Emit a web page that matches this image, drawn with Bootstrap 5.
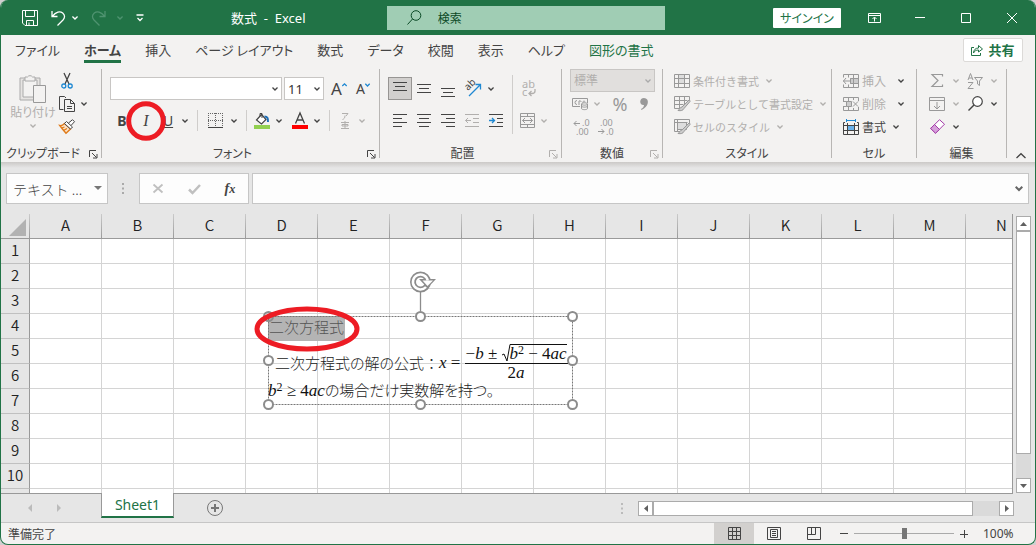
<!DOCTYPE html>
<html lang="ja">
<head>
<meta charset="utf-8">
<meta name="viewport" content="width=device-width, initial-scale=1">
<title>数式 - Excel</title>
<link href="https://cdn.jsdelivr.net/npm/bootstrap@5.3.0/dist/css/bootstrap.min.css" rel="stylesheet">
<style>
:root { --xl: #217346; --ink: #444; --dim: #b1afad; --line: #c8c6c4; }
body { font-family: "Noto Sans CJK JP", sans-serif; font-size: 12px; line-height: 16px; color: var(--ink); background: #d0d0d0; fill: none; stroke: currentColor; }
svg { display: block; overflow: visible; flex: none; }
.kana { font-feature-settings: "palt"; }
.app { height: 100vh; border: 1px solid var(--xl); border-top: 0; border-radius: 8px; overflow: hidden; background: #f3f2f1; }

.titlebar { display: grid; grid-template-columns: 386fr 279fr 370fr; height: 35px; flex: none; background: var(--xl); color: #fff; }
.titlebar .btn { color: inherit; }
.titlebar .quick { padding-left: 19px; }
.titlebar .btn.faded { color: #4f9370; }
.doc-title { font-family: "Noto Sans", "Noto Sans CJK JP", sans-serif; font-size: 13px; white-space: pre; }
.search { height: 24px; padding: 0 20px; background: #a0cdb4; color: #0b4a26; }
.search input { border: 0; background: none; padding: 0; font-size: 12px; color: inherit; box-shadow: none; }
.search input:focus { background: none; box-shadow: none; }
.search input::placeholder { color: inherit; opacity: 1; }
.titlebar .signin.btn { height: 20px; width: 68px; margin-right: 10px; background: #fff; color: var(--xl); border-radius: 1px; font-size: 12px; }
.winbtn { width: 46px; height: 34px; }

.btn { --bs-btn-padding-x: 0; --bs-btn-padding-y: 0; --bs-btn-border-width: 0; --bs-btn-border-radius: 0; --bs-btn-font-size: 12px; --bs-btn-line-height: 16px; --bs-btn-color: var(--ink); --bs-btn-disabled-color: var(--dim); --bs-btn-disabled-opacity: 1; display: inline-flex; align-items: center; justify-content: center; flex: none; white-space: nowrap; }
.btn.grey { --bs-btn-disabled-color: #999; }
.tabs { height: 29px; flex: none; padding-left: 14px; padding-right: 12px; }
.tabs .nav { gap: 24px; font-size: 13px; }
.tabs .nav-link { padding: 0; line-height: 21px; border-bottom: 3px solid transparent; color: var(--ink); height: 24px; white-space: nowrap; }
.tabs .nav-link.active { font-weight: 700; border-color: var(--xl); }
.tabs .nav-link.contextual { color: var(--xl); }
.share.btn { width: 60px; height: 24px; gap: 5px; background: #fff; border: 1px solid #dcdad8; border-radius: 2px; color: var(--xl); font-weight: 700; font-size: 13px; }

.ribbon { height: 98px; flex: none; padding: 5px 0 4px; }
.group { border-right: 1px solid #b8b6b4; flex: none; }
.group-name { position: relative; line-height: 10px; text-align: center; flex: none; }
.launcher.btn { position: absolute; right: 3px; bottom: -1px; width: 10px; height: 10px; }
.g-clip { width: 101px; } .g-font { width: 278px; } .g-align { width: 182px; } .g-num { width: 101px; }
.g-style { width: 169px; } .g-cell { width: 85px; } .g-edit { width: 90px; }
.inset { padding-left: 11px; }
.paste { width: 48px; }
.tall { padding-top: 8px; gap: 9px; }
.toolrow { display: flex; align-items: center; height: 23px; }
.t24 { width: 24px; height: 23px; } .t20 { width: 20px; height: 23px; } .chev { width: 14px; height: 23px; }
.rule { width: 1px; height: 21px; margin: 0 5px; background: #cfcdcb; }
.rule-tall { width: 1px; height: 59px; margin: 6px 4px 0; background: #cfcdcb; }
.form-select.pick { height: 23px; padding: 0 14px 0 3px; border: 1px solid var(--line); border-radius: 0; font: 13px/20px "Noto Sans", "Noto Sans CJK JP", sans-serif; color: #333; background: #fff url("data:image/svg+xml,%3Csvg xmlns='http://www.w3.org/2000/svg' viewBox='0 0 6 4'%3E%3Cpath d='M.5.5 3 3 5.5.5' fill='none' stroke='%23444' stroke-width='1.3'/%3E%3C/svg%3E") no-repeat right 3px center / 6px 4px; }
.form-select.pick:disabled { background-color: #e1dfdd; background-image: url("data:image/svg+xml,%3Csvg xmlns='http://www.w3.org/2000/svg' viewBox='0 0 6 4'%3E%3Cpath d='M.5.5 3 3 5.5.5' fill='none' stroke='%23aaa' stroke-width='1.3'/%3E%3C/svg%3E"); color: var(--dim); font-size: 12px; opacity: 1; }
.pick-font.pick { width: 172px; }
.pick-size.pick { width: 40px; margin: 0 3px 0 2px; }
.pick-number.pick { width: 85px; }
.grow.btn { font-size: 17px; } .shrink.btn { font-size: 14px; }
.letter.btn { font-size: 14px; }
.italic.btn { font: italic 16px "Liberation Serif", serif; }
.percent.btn { font-size: 18px; }
.pressed.btn { background: #d2d0ce; border: 1px solid #979593; }
.glyph { font-family: "Noto Sans", sans-serif; }
.labelled { gap: 3px; height: 23px; }
.styles .btn { font-size: 11px; }
.icon-text { font-family: "Noto Sans", sans-serif; fill: currentColor; stroke: none; }
.ring { position: absolute; left: 50%; top: 50%; transform: translate(-50%, -50%); color: #ed1c24; pointer-events: none; z-index: 3; }

.formulas { flex: none; padding: 11px 6px 10px 5px; background: linear-gradient(#cbc9c7, #e6e6e6 6px); }
.formulas .box, .formulas .form-control { height: 31px; border: 1px solid #c6c6c6; border-radius: 0; background: #fdfdfd; }
.formulas .box { width: 110px; margin-right: 3px; }
.formulas .form-control { font-size: 14px; padding: 0 8px; color: #444; }
.formulas .grip { margin: 0 15px 0 14px; color: #aaa; }
.namebox { width: 102px; }
.namebox .form-control { padding: 0 24px 0 6px; font-weight: 300; }
.over { position: absolute; right: 4px; top: 7px; width: 12px; height: 16px; }
.fx.btn { font: italic 700 14px/16px "Liberation Serif", serif; }

.workspace { flex: 1 1 0; min-height: 0; background: #e6e6e6; }
.canvas { position: relative; overflow: hidden; border-right: 1px solid #999; border-bottom: 1px solid #999; flex: 1 1 0; min-width: 0; background: #fff; }
.cells { table-layout: fixed; width: 0; border-collapse: separate; border-spacing: 0; color: #222; font-size: 15px; line-height: 20px; margin: 0; }
.cells th, .cells td { width: 72px; height: 25px; padding: 0 0 2px; text-align: center; font-weight: 350; border-right: 1px solid #d4d4d4; border-bottom: 1px solid #d4d4d4; }
.cells thead th { background: #e6e6e6; border-right: 1px solid; border-image: linear-gradient(#ccc, #999) 1; border-bottom: 1px solid #999; }
.cells tbody th { background: #e6e6e6; border-right-color: #999; border-bottom-color: #c0c0c0; }
.cells .corner { width: 29px; }
.cells .corner svg { margin: 4px 0 0 8px; }

.shape { position: absolute; left: 267px; top: 102px; width: 305px; height: 89px; color: #222; font-size: 15px; line-height: 22px; white-space: nowrap; font-weight: 300; }
.frame { position: absolute; left: 0; top: 0; z-index: 2; }
.picked { position: relative; background: #b4b4b4; color: #555; height: 25px; width: 77px; padding-left: 1px; }
.eqline { height: 38px; padding-left: 7px; margin-top: 3px; }
.eqline .wide { font-feature-settings: normal; }
.lastline { line-height: 16px; }
.math { font-family: "Liberation Serif", serif; font-weight: 400; color: #111; font-size: 17px; }
.math sup { font-size: 12px; top: -5px; line-height: 0; }
.fraction { display: inline-flex; flex-direction: column; align-items: center; }
.fraction .num { border-bottom: 1px solid #111; line-height: 19px; padding: 0 1px; display: flex; }
.fraction .den { line-height: 18px; }
.radicand { border-top: 1px solid #111; line-height: 17px; }

.vscroll { width: 15px; margin: 2px 4px 1px 3px; background: #dadada; }
.sbtn.btn { width: 15px; height: 15px; background: #fff; border: 1px solid #ababab; color: #606060; }
.vthumb { flex: 1 1 0; margin-bottom: 24px; background: #fff; border: 1px solid #ababab; }
.sheetbar { height: 28px; flex: none; background: #e6e6e6; color: #bbb; }
.sheetbar .navs { width: 100px; padding-left: 26px; gap: 23px; }
.sheet-tab { width: 73px; height: 25px; margin-top: -1px; align-self: flex-start; position: relative; background: #fff; border-left: 1px solid #999; border-right: 1px solid #999; border-bottom: 2px solid var(--xl); color: var(--xl); font: 14px/24px "Noto Sans", sans-serif; text-align: center; text-decoration: none; }
.newsheet.btn { width: 33px; margin-left: 24px; }
.sheetbar .grip { margin-right: 15px; }
.hscroll { flex: 0 0 376px; height: 15px; margin-right: 21px; background: #dadada; }
.hthumb { flex: 0 0 320px; border: 1px solid #ababab; background: #fff; }
.statusbar { height: 22px; flex: none; border-top: 1px solid #c6c6c6; padding-left: 7px; }
.view.btn { width: 40px; height: 21px; }
.view.on { background: #d2d0ce; }
.zoomer { -webkit-appearance: none; appearance: none; width: 100px; height: 12px; background: linear-gradient(#aaa, #aaa) center / 100% 1px no-repeat; }
.zoomer::-webkit-slider-thumb { -webkit-appearance: none; width: 5px; height: 11px; background: #767676; border-radius: 0; }
.pct { width: 61px; padding-left: 9px; font: 12px/16px "Noto Sans", sans-serif; }
</style>
</head>
<body>
<svg width="0" height="0" class="position-absolute" aria-hidden="true">
  <symbol id="cv" viewBox="0 0 6 4"><path d="M.4.5 3 3 5.6.5" stroke-width="1.4"/></symbol>
  <symbol id="launch" viewBox="0 0 9 9"><path d="M.5 7V.5H7M3 3l4.500 4.500M8 4v4H4"/></symbol>
  <symbol id="dots" viewBox="0 0 2 11"><path d="M0 1h2M0 5.500h2M0 10h2" stroke-width="2"/></symbol>
</svg>

<div class="app d-flex flex-column">
  <header class="titlebar">
    <div class="d-flex align-items-center">
      <div class="quick d-flex align-items-center">
        <button class="btn t20" aria-label="上書き保存"><svg width="16" height="16" viewBox="0 0 16 16"><path d="M.5.5h15v15H3L.5 13zM3.500.5v6h9v-6M4.500 15.500v-5h7v5M7 15v-2.500"/></svg></button>
        <button class="btn ms-2 t20" aria-label="元に戻す"><svg width="15" height="16" viewBox="0 0 15 16" stroke-width="1.3"><path d="M1 1v5.500h5.500M1.300 6.300C5 1.500 9 .8 11.700 3c2.600 2.300 2.200 5 .3 7l-5.500 5.500"/></svg></button>
        <button class="btn chev me-1" aria-label="元に戻す一覧"><svg width="6" height="4"><use href="#cv"/></svg></button>
        <button class="btn t24 faded" disabled aria-label="やり直し"><svg width="15" height="16" viewBox="0 0 15 16" stroke-width="1.3"><path d="M14 1v5.500H8.500M13.700 6.300C10 1.500 6 .8 3.300 3c-2.600 2.300-2.200 5-.3 7l5.500 5.500"/></svg></button>
        <button class="btn t20 faded" disabled aria-label="やり直し一覧"><svg width="6" height="4"><use href="#cv"/></svg></button>
        <button class="btn t20" aria-label="ツールバーの設定"><svg width="8" height="8" viewBox="0 0 8 8"><path d="M.5 1h7M1.500 4 4 6.500 6.500 4" stroke-width="1.3"/></svg></button>
      </div>
      <div class="doc-title flex-fill text-center">数式  -  Excel</div>
    </div>
    <label class="search d-flex align-items-center align-self-center w-100">
      <svg class="me-3" width="15" height="15" viewBox="0 0 15 15"><circle cx="9" cy="5.500" r="4.800"/><path d="M5.500 9 .5 14.500"/></svg>
      <input class="form-control" type="search" placeholder="検索" aria-label="検索">
    </label>
    <div class="d-flex align-items-center justify-content-end">
      <button class="btn signin kana">サインイン</button>
      <button class="btn winbtn" aria-label="リボンの表示オプション"><svg width="13" height="10" viewBox="0 0 13 10"><path d="M.5.5h12v9H.5zM.5 2.500h12M6.500 8.500v-4M4.500 6l2-2 2 2"/></svg></button>
      <button class="btn winbtn" aria-label="最小化"><svg width="10" height="1" viewBox="0 0 10 1"><path d="M0 .5h10"/></svg></button>
      <button class="btn winbtn" aria-label="最大化"><svg width="10" height="10" viewBox="0 0 10 10"><path d="M.5.5h9v9h-9z"/></svg></button>
      <button class="btn winbtn" aria-label="閉じる"><svg width="10" height="10" viewBox="0 0 10 10"><path d="M0 0l10 10M10 0 0 10"/></svg></button>
    </div>
  </header>

  <div class="tabs d-flex align-items-center justify-content-between">
    <nav class="nav flex-nowrap kana align-self-start pt-1">
      <a class="nav-link" href="#">ファイル</a><a class="nav-link active" href="#" aria-current="page">ホーム</a><a class="nav-link" href="#">挿入</a><a class="nav-link" href="#">ページ レイアウト</a><a class="nav-link" href="#">数式</a><a class="nav-link" href="#">データ</a><a class="nav-link" href="#">校閲</a><a class="nav-link" href="#">表示</a><a class="nav-link" href="#">ヘルプ</a><a class="nav-link contextual" href="#">図形の書式</a>
    </nav>
    <button class="btn share"><svg width="12" height="12" viewBox="0 0 12 12"><path d="M3 3.500H.5v8h9V9M2.500 9c0-3 2-5 5-5V1.500L11.500 5 7.500 8V6C5 6 3.500 7 2.500 9z"/></svg>共有</button>
  </div>

  <div class="ribbon d-flex">
    <section class="group g-clip d-flex flex-column">
      <div class="d-flex flex-fill">
        <button class="btn paste flex-column kana justify-content-start pt-1 ms-2" disabled>
          <svg width="28" height="31" viewBox="0 0 28 31"><path fill="#e6e4e2" stroke="#aaa" d="M1 5h20v22H1z"/><path fill="#f3f2f1" stroke="#aaa" d="M4 7h14v17H4z"/><path fill="#f3f2f1" stroke="#aaa" d="M6 8V4h2.500a3 3 0 0 1 5 0H16v4z"/><path fill="#f3f2f1" stroke="#999" d="M14.500 12.500h12v17h-12z"/></svg>
          <span>貼り付け</span>
          <svg class="mt-1" width="6" height="4"><use href="#cv"/></svg>
        </button>
        <div>
          <div class="toolrow"><button class="btn t20" aria-label="切り取り"><svg width="12" height="16" viewBox="0 0 12 16"><path d="M3 0l5 11M9 0 4 11" stroke-width="1.300"/><g stroke="#1e88d2" stroke-width="1.300"><circle cx="2.800" cy="13" r="2"/><circle cx="9.200" cy="13" r="2"/></g></svg></button></div>
          <div class="toolrow"><button class="btn t20" aria-label="コピー"><svg width="16" height="16" viewBox="0 0 16 16"><path d="M4.500 13.500h-4V.5h5L7 2M5.500 3.500h6l4 4v8h-10zM11.500 3.500v4h4M8 10.500h5M8 12.500h5"/></svg></button><button class="btn chev" aria-label="コピーのオプション"><svg width="6" height="4"><use href="#cv"/></svg></button></div>
          <div class="toolrow"><button class="btn t20" aria-label="書式のコピー"><svg width="16" height="15" viewBox="0 0 16 15"><path fill="#fbe3c8" stroke="#e07b1a" stroke-width="1.400" d="M.8 6.500C3 7 4.500 5.500 5.500 4.500l6 5.500L7 14.300C5 12 3 9.500.8 6.500z"/><path stroke="#e07b1a" stroke-width="1.300" d="M2.500 9l3-1M4.500 11.500l3.500-2"/><path fill="#fff" d="M5.500 4.500l2-2 6 5.500-2 2zM9.500 4 13.500.7l2 2L12 6.500"/></svg></button></div>
        </div>
      </div>
      <div class="group-name kana pe-3">クリップボード<button class="btn launcher" aria-label="クリップボードの設定"><svg width="9" height="9"><use href="#launch"/></svg></button></div>
    </section>

    <section class="group g-font d-flex flex-column">
      <div class="tall d-flex flex-column flex-fill ps-2">
        <div class="toolrow">
          <select class="form-select pick pick-font" aria-label="フォント"><option></option></select>
          <select class="form-select pick pick-size" aria-label="フォント サイズ"><option>11</option></select>
          <button class="btn t24 glyph grow" aria-label="フォント サイズの拡大">A<svg width="5" height="12" viewBox="0 0 5 12" stroke="#1e88d2"><path d="M.3 3 2.500.8 4.700 3" stroke-width="1.300"/></svg></button>
          <button class="btn t24 glyph shrink" aria-label="フォント サイズの縮小">A<svg width="5" height="12" viewBox="0 0 5 12" stroke="#1e88d2"><path d="M.3.8 2.500 3 4.700.8" stroke-width="1.300"/></svg></button>
        </div>
        <div class="toolrow">
          <button class="btn t24 glyph letter fw-bold">B</button>
          <button class="btn t24 italic position-relative">I<svg class="ring" width="40" height="40" viewBox="0 0 40 40"><circle cx="20" cy="20" r="17.300" stroke-width="5"/></svg></button>
          <button class="btn t20 glyph letter text-decoration-underline">U</button>
          <button class="btn chev" aria-label="下線の種類"><svg width="6" height="4"><use href="#cv"/></svg></button>
          <span class="rule"></span>
          <button class="btn t24" aria-label="罫線"><svg width="15" height="15" viewBox="0 0 15 15"><path stroke="#666" stroke-dasharray="1 1" d="M.5 0v14M7.500 0v14M14.500 0v14M0 .5h15M0 7.500h15"/><path d="M0 14.500h15"/></svg></button>
          <button class="btn chev" aria-label="罫線の種類"><svg width="6" height="4"><use href="#cv"/></svg></button>
          <span class="rule"></span>
          <button class="btn t20" aria-label="塗りつぶしの色"><svg width="16" height="16" viewBox="0 0 16 16"><path fill="#92d050" stroke="none" d="M0 12h16v4H0z"/><path fill="#fff" stroke-width="1.200" d="M2.500 7 7.500 1.500l4.500 5L7.500 11z"/><path d="M6 3.500V.5h2V5"/><path stroke="#1e6fb8" stroke-width="2" d="M10.500 3.500c3 0 3.500 1.500 3.500 5.500"/></svg></button>
          <button class="btn chev me-1" aria-label="塗りつぶしの色一覧"><svg width="6" height="4"><use href="#cv"/></svg></button>
          <button class="btn t20" aria-label="フォントの色"><svg width="16" height="16" viewBox="0 0 16 16"><path fill="#f00" stroke="none" d="M0 12h16v4H0z"/><path d="M3.500 10.500 8 0l4.500 10.500M5 7h6" stroke-width="1.300"/></svg></button>
          <button class="btn chev" aria-label="フォントの色一覧"><svg width="6" height="4"><use href="#cv"/></svg></button>
          <span class="rule"></span>
          <button class="btn t20" disabled aria-label="ふりがな"><svg width="8" height="16" viewBox="0 0 8 16"><path d="M1 .5h6L5 3M4 2.500C4 5 3 6 1.500 6.500M0 9.500h8M1 11.500h6v1.500H1zM0 15.500h8M4 8v7"/></svg></button>
          <button class="btn chev" disabled aria-label="ふりがな一覧"><svg width="6" height="4"><use href="#cv"/></svg></button>
        </div>
      </div>
      <div class="group-name kana pe-3">フォント<button class="btn launcher" aria-label="フォントの設定"><svg width="9" height="9"><use href="#launch"/></svg></button></div>
    </section>

    <section class="group g-align d-flex flex-column">
      <div class="d-flex flex-fill ps-2">
        <div class="tall d-flex flex-column">
          <div class="toolrow">
            <button class="btn t24 pressed" aria-label="上揃え"><svg class="mb-1" width="14" height="10" viewBox="0 0 14 10"><path d="M0 .5h14M2 4.500h10M0 8.500h14"/></svg></button>
            <button class="btn t24" aria-label="上下中央揃え"><svg width="14" height="10" viewBox="0 0 14 10"><path d="M0 .5h14M2 4.500h10M0 8.500h14"/></svg></button>
            <button class="btn t24 pt-2" aria-label="下揃え"><svg width="14" height="10" viewBox="0 0 14 10"><path d="M0 .5h14M2 4.500h10M0 8.500h14"/></svg></button>
            <button class="btn t24" aria-label="方向"><svg width="17" height="17" viewBox="0 0 17 17"><text class="icon-text" transform="translate(4 11) rotate(-45)" font-size="10">ab</text><path stroke="#1e88d2" stroke-width="1.300" d="M5 16 16 5M11.500 4.500H16.500V9.500"/></svg></button>
            <button class="btn chev" aria-label="方向の一覧"><svg width="6" height="4"><use href="#cv"/></svg></button>
          </div>
          <div class="toolrow">
            <button class="btn t24" aria-label="左揃え"><svg width="14" height="13" viewBox="0 0 14 13"><path d="M0 .5h14M0 4.500h9M0 8.500h14M0 12.500h9"/></svg></button>
            <button class="btn t24" aria-label="中央揃え"><svg width="14" height="13" viewBox="0 0 14 13"><path d="M0 .5h14M2 4.500h10M0 8.500h14M2 12.500h10"/></svg></button>
            <button class="btn t24" aria-label="右揃え"><svg width="14" height="13" viewBox="0 0 14 13"><path d="M0 .5h14M5 4.500h9M0 8.500h14M5 12.500h9"/></svg></button>
            <button class="btn t24" disabled aria-label="インデントを減らす"><svg width="14" height="13" viewBox="0 0 14 13"><path d="M0 .5h14M8 4.500h6M8 8.500h6M0 12.500h14M.5 6.500H6M3 4 .5 6.500 3 9"/></svg></button>
            <button class="btn t24" aria-label="インデントを増やす"><svg width="14" height="13" viewBox="0 0 14 13"><path d="M0 .5h14M8 4.500h6M8 8.500h6M0 12.500h14"/><path stroke="#1e88d2" stroke-width="1.300" d="M0 6.500h5.500M3 4l2.500 2.500L3 9"/></svg></button>
          </div>
        </div>
        <span class="rule-tall"></span>
        <div class="tall d-flex flex-column">
          <div class="toolrow"><button class="btn t24" disabled aria-label="折り返して全体を表示する"><svg width="14" height="16" viewBox="0 0 14 16"><text class="icon-text" x="0" y="7" font-size="11">ab</text><text class="icon-text" x="0" y="15" font-size="11">c</text><path d="M13 8v2c0 2-1 2.500-3 2.500H7M9.500 10 7 12.500 9.500 15" stroke-width="1.300"/></svg></button></div>
          <div class="toolrow"><button class="btn t20 grey" disabled aria-label="セルを結合して中央揃え"><svg width="15" height="15" viewBox="0 0 15 15"><path d="M.5.5h14v14H.5zM.5 3.500h14M.5 11.500h14M7.500.5v3M7.500 11.500v3M2.500 7.500h10M5 5 2.500 7.500 5 10M10 5l2.500 2.500L10 10"/></svg></button><button class="btn chev" disabled aria-label="結合の一覧"><svg width="6" height="4"><use href="#cv"/></svg></button></div>
        </div>
      </div>
      <div class="group-name pe-3">配置<button class="btn launcher" disabled aria-label="配置の設定"><svg width="9" height="9"><use href="#launch"/></svg></button></div>
    </section>

    <section class="group g-num d-flex flex-column">
      <div class="flex-fill ps-2">
        <select class="form-select pick pick-number" aria-label="数値の書式" disabled><option>標準</option></select>
        <div class="toolrow">
          <button class="btn t20 grey" disabled aria-label="通貨表示形式"><svg width="16" height="13" viewBox="0 0 16 13"><path d="M15.500 6V1.500H.5v8H8M5 3.500a2 2 0 1 0 0 4M7 8V4c1.500-.5 2 0 2 1M11 7V5.500c0-2 2-2 2 0"/><path fill="#f3f2f1" d="M9.500 7v4.500c0 1.500 6 1.500 6 0V7M9.500 7c0 1.500 6 1.500 6 0s-6-1.500-6 0M9.500 9c0 1.500 6 1.500 6 0"/></svg></button>
          <button class="btn chev" disabled aria-label="通貨の一覧"><svg width="6" height="4"><use href="#cv"/></svg></button>
          <button class="btn t24 glyph percent grey ms-1" disabled>%</button>
          <button class="btn t24 grey" disabled aria-label="桁区切りスタイル"><svg width="8" height="12" viewBox="0 0 8 12"><path fill="#999" stroke="none" d="M4 0c6 0 5 9-2.500 12L1 11c2-1 3-2.500 3-4-5 .5-5-7 0-7z"/></svg></button>
        </div>
        <div class="toolrow">
          <button class="btn t24 grey" disabled aria-label="小数点以下の表示桁数を増やす"><svg width="16" height="16" viewBox="0 0 16 16"><path d="M0 4.500h6M2.500 2 0 4.500 2.500 7"/><g class="icon-text" font-size="9"><text x="8" y="7">.0</text><text x="2" y="16">.00</text></g></svg></button>
          <button class="btn t24 grey" disabled aria-label="小数点以下の表示桁数を減らす"><svg width="16" height="16" viewBox="0 0 16 16"><path d="M0 12.500h6M3.500 10 6 12.500 3.500 15"/><g class="icon-text" font-size="9"><text x="2" y="7">.00</text><text x="8" y="16">.0</text></g></svg></button>
        </div>
      </div>
      <div class="group-name">数値<button class="btn launcher" disabled aria-label="数値の設定"><svg width="9" height="9"><use href="#launch"/></svg></button></div>
    </section>

    <section class="group g-style d-flex flex-column">
      <div class="styles inset flex-fill d-flex flex-column align-items-start kana">
        <button class="btn labelled" disabled><svg width="16" height="14" viewBox="0 0 16 14" stroke="#999"><path fill="#ddd" d="M4.500.5h6v9h-6z"/><path d="M.5.5h15v13H.5zM4.500.5v13M10.500.5v13M.5 4.500h15M.5 9.500h15"/></svg>条件付き書式<svg width="6" height="4" class="ms-1"><use href="#cv"/></svg></button>
        <button class="btn labelled" disabled><svg width="16" height="15" viewBox="0 0 16 15" stroke="#999"><path d="M8 12.500H.5V.5h15V5M5.500.5v12M10.500.5V8M.5 4.500h13M.5 8.500h9"/><path fill="#ccc" d="M15.500 3.500 8 11c-2 0-2 2-4 3.500 3 .5 5 0 6-2l6-7z"/></svg>テーブルとして書式設定<svg width="6" height="4" class="ms-1"><use href="#cv"/></svg></button>
        <button class="btn labelled" disabled><svg width="16" height="15" viewBox="0 0 16 15" stroke="#999"><path fill="#ddd" d="M3.500 3.500h9v7h-9z"/><path d="M8 12.500H.5V.5h15V5M3.500.5v12M.5 3.500h13"/><path fill="#ccc" d="M15.500 3.500 8 11c-2 0-2 2-4 3.500 3 .5 5 0 6-2l6-7z"/></svg>セルのスタイル<svg width="6" height="4" class="ms-1"><use href="#cv"/></svg></button>
      </div>
      <div class="group-name kana">スタイル</div>
    </section>

    <section class="group g-cell d-flex flex-column">
      <div class="inset flex-fill">
        <div class="toolrow"><button class="btn labelled" disabled><svg width="16" height="14" viewBox="0 0 16 14" stroke="#999"><path fill="#ccc" d="M7.500 4.500h8v5h-8z"/><path d="M3 .5H.5v3M.5 10.500v3h15V.5H3M5.500.5v3M5.500 10.500v3M10.500.5v13M7.500 4.500h8M7.500 9.500h8M0 7h7M3 4 .5 7 3 10"/></svg>挿入</button><button class="btn chev ms-2" aria-label="挿入の一覧"><svg width="6" height="4"><use href="#cv"/></svg></button></div>
        <div class="toolrow"><button class="btn labelled" disabled><svg width="16" height="14" viewBox="0 0 16 14" stroke="#999"><path fill="#ccc" d="M3.500 4.500h5v5h-5z"/><path d="M.5 4V.5h15V4M.5 10v3.500h15V10M5.500.5v4M10.500.5V3M5.500 9.500v4M10.500 11v2.500M0 4.500h3.500M0 9.500h3.500M10 4.500l5 5M15 4.500l-5 5"/></svg>削除</button><button class="btn chev ms-2" aria-label="削除の一覧"><svg width="6" height="4"><use href="#cv"/></svg></button></div>
        <div class="toolrow"><button class="btn labelled"><svg width="16" height="16" viewBox="0 0 16 16"><path stroke="#1e88d2" d="M3.500 1.500h9M3.500 0v3M12.500 0v3"/><path fill="#69b1ea" stroke="none" d="M5 7h6v4H5z"/><path d="M2 3.500H.5v12h15v-12H14M4.500 4v11.500M11.500 4v11.500M.5 6.500h15M.5 11.500h15"/></svg>書式<svg width="6" height="4" class="ms-1"><use href="#cv"/></svg></button></div>
      </div>
      <div class="group-name kana">セル</div>
    </section>

    <section class="group g-edit d-flex flex-column">
      <div class="flex-fill ps-2">
        <div class="toolrow">
          <button class="btn t24 grey" disabled aria-label="合計"><svg width="12" height="13" viewBox="0 0 12 13"><path d="M11.500 2.500V.5H1l6 6-6 6h10.500v-2" stroke-width="1.200"/></svg></button><button class="btn chev" disabled aria-label="合計の一覧"><svg width="6" height="4"><use href="#cv"/></svg></button>
          <button class="btn t24 grey" disabled aria-label="並べ替えとフィルター"><svg width="16" height="16" viewBox="0 0 16 16"><path d="M1 7 3.500.5 6 7M2 5h3M1 9.500h5l-5 6h5.500M7.500 4.500h8L12.500 8v4.500l-2-1.500V8z"/></svg></button><button class="btn chev" disabled aria-label="並べ替えの一覧"><svg width="6" height="4"><use href="#cv"/></svg></button>
        </div>
        <div class="toolrow">
          <button class="btn t24 grey" disabled aria-label="フィル"><svg width="16" height="14" viewBox="0 0 16 14"><path d="M.5.5h15v13H.5zM.5 3.500h15M8 5v7M5 9l3 3 3-3"/></svg></button><button class="btn chev" disabled aria-label="フィルの一覧"><svg width="6" height="4"><use href="#cv"/></svg></button>
          <button class="btn t24" aria-label="検索と選択"><svg width="15" height="15" viewBox="0 0 15 15"><circle cx="9.500" cy="5.500" r="4.800" stroke-width="1.200" fill="#fff"/><path d="M6 9 .5 14.500" stroke-width="1.400"/></svg></button><button class="btn chev" aria-label="検索の一覧"><svg width="6" height="4"><use href="#cv"/></svg></button>
        </div>
        <div class="toolrow">
          <button class="btn t24" aria-label="クリア"><svg width="15" height="15" viewBox="0 0 15 15" stroke="#a33aa8"><path fill="#fff" d="M.7 9.500 9.500.7l5 4.500-9 9z"/><path fill="#d6a1da" d="M.7 9.500 4.500 5.500l5 5-4 3.700z"/></svg></button><button class="btn chev" aria-label="クリアの一覧"><svg width="6" height="4"><use href="#cv"/></svg></button>
        </div>
      </div>
      <div class="group-name">編集</div>
    </section>
    <button class="btn flex-fill align-items-end" aria-label="リボンを折りたたむ"><svg width="10" height="5" viewBox="0 0 10 5"><path d="M.5 5 5 .7 9.500 5" stroke-width="1.300"/></svg></button>
  </div>

  <div class="formulas d-flex align-items-center">
    <div class="namebox position-relative"><input class="form-control" value="テキスト ..." aria-label="名前ボックス"><button class="btn over" aria-label="名前の一覧"><svg width="8" height="4" viewBox="0 0 8 4"><path fill="#777" stroke="none" d="M0 0h8L4 4z"/></svg></button></div>
    <svg class="grip" width="2" height="11"><use href="#dots"/></svg>
    <div class="box d-flex align-items-center justify-content-around">
      <button class="btn t24" disabled aria-label="キャンセル"><svg width="10" height="9" viewBox="0 0 10 9" stroke="#c0c0c0" stroke-width="1.800"><path d="M.5.5l9 8M9.500.5l-9 8"/></svg></button>
      <button class="btn t24" disabled aria-label="入力"><svg width="13" height="10" viewBox="0 0 13 10" stroke="#c0c0c0" stroke-width="2.500"><path d="M1 5.500 4.500 9 12 1"/></svg></button>
      <button class="btn t24 fx" aria-label="関数の挿入">f<small>x</small></button>
    </div>
    <div class="position-relative flex-fill"><input class="form-control w-100" aria-label="数式バー"><button class="btn over" aria-label="数式バーの展開"><svg width="8" height="5" viewBox="0 0 8 5"><path d="M.7.8 4 4 7.300.8" stroke="#666" stroke-width="2"/></svg></button></div>
  </div>

  <div class="workspace d-flex">
    <main class="canvas">
      <table class="cells"><thead><tr><th class="corner" aria-label="すべて選択"><svg width="17" height="17" viewBox="0 0 17 17"><path fill="#b2b2b2" stroke="none" d="M17 0v17H0z"/></svg></th></tr></thead><tbody></tbody></table>
      <div class="shape kana">
        <svg class="frame" width="305" height="89" viewBox="0 0 305 89" stroke="#8c8c8c">
          <path stroke="#777" stroke-dasharray="2 1" d="M.5.5h304v88H.5z"/>
          <path d="M152.500-24v19" stroke-width="1.300"/>
          <g stroke-width="2" fill="#fff"><circle cx=".5" cy=".5" r="4.500" fill="none"/><circle cx="152.500" cy=".5" r="4.500"/><circle cx="304.500" cy=".5" r="4.500"/><circle cx=".5" cy="44.500" r="4.500"/><circle cx="304.500" cy="44.500" r="4.500"/><circle cx=".5" cy="88.500" r="4.500"/><circle cx="152.500" cy="88.500" r="4.500"/><circle cx="304.500" cy="88.500" r="4.500"/></g>
          <circle cx="152.500" cy="-34" r="7.500" stroke-width="6" fill="#fff" stroke="#8c8c8c"/>
          <path fill="#8c8c8c" stroke="none" d="M151-37h17l-8.500 9z"/>
          <path fill="#fff" stroke="none" d="M154.500-35.500h10.500l-5.500 5.500z"/>
          <path stroke="#fff" stroke-width="2.500" d="M158-29a7.500 7.500 0 1 1 1.800-6.500"/>
        </svg>
        <div class="picked">二次方程式<svg class="ring" width="106" height="46" viewBox="0 0 106 46"><ellipse cx="53" cy="23" rx="50" ry="20" stroke-width="5"/></svg></div>
        <div class="eqline d-flex align-items-center">二次方程式の解の公式<span class="wide">：</span><span class="math d-flex align-items-center"><i>x</i>&nbsp;=&nbsp;<span class="fraction"><span class="num">−<i>b</i>&nbsp;±&nbsp;<svg width="8" height="18" viewBox="0 0 8 18"><path d="M0 11l2-1 3 7L8 .5"/></svg><span class="radicand"><i>b</i><sup>2</sup> − 4<i>ac</i></span></span><span class="den">2<i>a</i></span></span></span></div>
        <div class="lastline"><span class="math"><i>b</i><sup>2</sup> ≥ 4<i>ac</i></span>の場合だけ実数解を持つ。</div>
      </div>
    </main>
    <div class="vscroll d-flex flex-column">
      <button class="btn sbtn" aria-label="上へ"><svg width="7" height="4" viewBox="0 0 7 4"><path fill="#606060" stroke="none" d="M0 4h7L3.500 0z"/></svg></button>
      <div class="vthumb"></div>
      <button class="btn sbtn" aria-label="下へ"><svg width="7" height="4" viewBox="0 0 7 4"><path fill="#606060" stroke="none" d="M0 0h7L3.500 4z"/></svg></button>
    </div>
  </div>

  <div class="sheetbar d-flex align-items-center">
    <div class="navs d-flex"><svg width="6" height="8" viewBox="0 0 6 8"><path fill="#bbb" stroke="none" d="M5 0v8L1 4z"/></svg><svg width="6" height="8" viewBox="0 0 6 8"><path fill="#bbb" stroke="none" d="M1 0v8l4-4z"/></svg></div>
    <a class="sheet-tab" href="#">Sheet1</a>
    <button class="btn newsheet" aria-label="新しいシート"><svg width="16" height="16" viewBox="0 0 16 16" stroke="#777"><circle cx="8" cy="8" r="7.500"/><path d="M4 8h8M8 4v8" stroke-width="2"/></svg></button>
    <svg class="grip ms-auto" width="2" height="11"><use href="#dots"/></svg>
    <div class="hscroll d-flex">
      <button class="btn sbtn" aria-label="左へ"><svg width="4" height="7" viewBox="0 0 4 7"><path fill="#606060" stroke="none" d="M4 0v7L0 3.500z"/></svg></button>
      <div class="hthumb"></div>
      <button class="btn sbtn ms-auto" aria-label="右へ"><svg width="4" height="7" viewBox="0 0 4 7"><path fill="#606060" stroke="none" d="M0 0v7l4-3.500z"/></svg></button>
    </div>
  </div>

  <footer class="statusbar d-flex align-items-center">
    <span class="me-auto">準備完了</span>
    <button class="btn view on" aria-label="標準"><svg width="13" height="13" viewBox="0 0 13 13"><path d="M.5.5h12v12H.5zM4.500.5v12M8.500.5v12M.5 4.500h12M.5 8.500h12"/></svg></button>
    <button class="btn view" aria-label="ページ レイアウト"><svg width="14" height="13" viewBox="0 0 14 13"><path d="M.5.5h13v12H.5zM3.500 2.500h7v8h-7zM5 4.500h4M5 6.500h4M5 8.500h4"/></svg></button>
    <button class="btn view" aria-label="改ページ プレビュー"><svg width="14" height="13" viewBox="0 0 14 13"><path d="M.5.5h13v12H.5zM.5 7.500h8v-7M4.500.5v7"/></svg></button>
    <button class="btn t20" aria-label="縮小"><svg width="8" height="1" viewBox="0 0 8 1"><path d="M0 .5h8"/></svg></button>
    <input class="zoomer" type="range" min="10" max="190" value="100" aria-label="ズーム">
    <button class="btn t20" aria-label="拡大"><svg width="8" height="8" viewBox="0 0 8 8"><path d="M0 4.500h8M4.500 0v8"/></svg></button>
    <span class="pct">100%</span>
  </footer>
</div>
<script src="https://cdn.jsdelivr.net/npm/bootstrap@5.3.0/dist/js/bootstrap.bundle.min.js"></script>
<script>
  // Fill the visible sheet with lettered columns and numbered rows.
  const table = document.querySelector('.cells');
  const canvas = document.querySelector('.canvas');
  const head = table.tHead.rows[0];
  const corner = head.cells[0];

  function columnName(n) {
    return (n >= 26 ? columnName(Math.floor(n / 26) - 1) : '') + String.fromCharCode(65 + n % 26);
  }

  function fillSheet() {
    const cols = Math.ceil((canvas.clientWidth - 29) / 72);
    const rows = Math.ceil(canvas.clientHeight / 25) - 1;
    head.replaceChildren(corner);
    for (let c = 0; c < cols; c++) {
      const th = document.createElement('th');
      th.textContent = columnName(c);
      head.append(th);
    }
    const body = table.tBodies[0];
    body.replaceChildren();
    for (let r = 1; r <= rows; r++) {
      const tr = body.insertRow();
      const th = document.createElement('th');
      if (25 * r + 18 < canvas.clientHeight) th.textContent = r;
      tr.append(th);
      for (let c = 0; c < cols; c++) tr.insertCell();
    }
  }
  fillSheet();
  addEventListener('resize', fillSheet);
</script>
</body>
</html>
